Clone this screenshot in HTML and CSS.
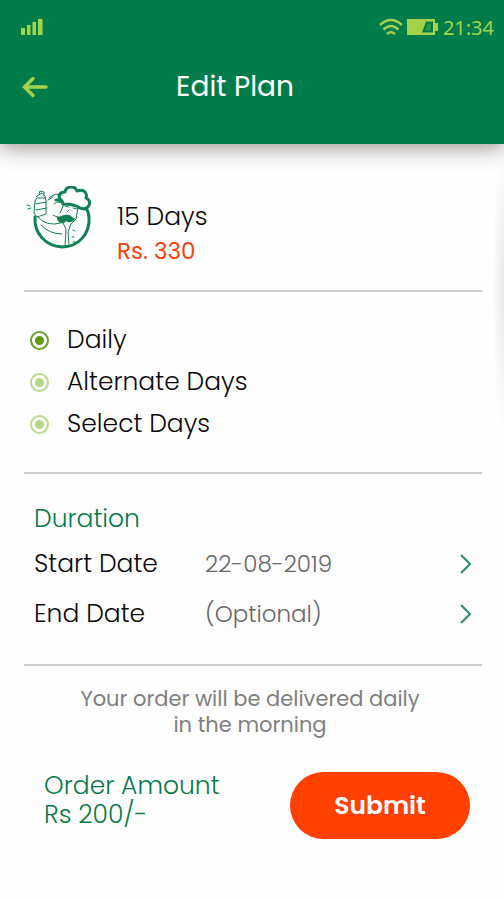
FILE: index.html
```html
<!DOCTYPE html>
<html lang="en">
<head>
  <meta charset="utf-8">
  <meta name="viewport" content="width=device-width, initial-scale=1">
  <title>Edit Plan</title>
  <link rel="stylesheet" href="styles.css">
</head>
<body>
  <header class="app-header">
    <div class="status-bar">
      <svg class="signal" width="24" height="18" viewBox="0 0 24 18" aria-hidden="true">
        <path d="M1 10h4v7H1zM7 7h3.500v10H7zM12.500 4H16v13h-3.500zM18 1h4.500v16H18z"/>
      </svg>
      <div class="status-right">
        <svg class="wifi" width="24" height="18" viewBox="0 0 24 18" aria-hidden="true">
          <path d="M1 7Q12-3 23 7M4.500 11.500q7.500-7 15 0M8 16q4-3.500 8 0"/>
        </svg>
        <svg class="battery" width="32" height="18" viewBox="0 0 32 18" aria-hidden="true">
          <path fill-rule="evenodd" d="M0 1h28v4h3v8h-3v4H0zM19 3.500L15 14.500h11V3.500z"/>
          <path d="M20.500 5.500h3v7h-5.500z" fill="#38953f"/>
        </svg>
        <span class="time">21:34</span>
      </div>
    </div>
    <div class="title-bar">
      <button class="back" type="button" aria-label="Back">
        <svg width="26" height="22" viewBox="0 0 26 22" aria-hidden="true"><path d="M24 11H3M11 2.500L2.500 11l8.500 8.500"/></svg>
      </button>
      <h1 class="title">Edit Plan</h1>
    </div>
  </header>

  <form class="content">
    <section class="plan">
      <svg class="logo" width="66" height="64" viewBox="0 0 66 64" aria-hidden="true">
        <path class="bold" d="M9 31C8 47 19 60 36 61c17 0 28-14 27-29 0-4-1-7-3-10"/>
        <path class="bold" d="M36 16c-2-1-4-3-6-2M36 15c-5-4-3-9 3-9 1-6 10-7 12-1 6-2 11 1 9 7 6 3 4 9-2 11l-4-1c-4-3-11-4-17-4z"/>
        <path class="line" d="M11 10l5-3 3 3 1 5v13l-9 3-3-4 1-12 2-3zM12 12h7M10 18l10-2M10 24l11-2M13 8l1-3 4 1v4M1 19l3 1M2 23l3-1"/>
        <path class="line" d="M23 12q7-6 13-3M22 14l5-3M28 18q5-5 10 1M38 18l-4 9M52 22l-2 11-5 5M39 20l4 1M47 22l4 1M41 26l2-2M12 31q8 10 23 6M15 39q8 9 21 9M27 29l4 2"/>
        <path class="fill" d="M31 30c4 2 6-2 10-1 4-1 5 4 8 3-1 5-7 5-9 3-3 5-10 1-9-5z"/>
        <path class="line" d="M37 37l3 6-1 17M45 38l-3 8 1 13M47 44l2 1M46 51h2M47 56h2"/>
      </svg>
      <div class="plan-text">
        <div class="plan-name">15 Days</div>
        <div class="plan-price">Rs. 330</div>
      </div>
    </section>

    <fieldset class="frequency" aria-label="Frequency">
      <label class="option"><input type="radio" name="frequency" checked>Daily</label>
      <label class="option"><input type="radio" name="frequency">Alternate Days</label>
      <label class="option"><input type="radio" name="frequency">Select Days</label>
    </fieldset>

    <section class="duration">
      <h2 class="duration-title">Duration</h2>
      <div class="date-row">
        <label for="start-date">Start Date</label>
        <input id="start-date" type="text" value="22-08-2019">
        <button type="button" aria-label="Choose start date">
          <svg width="12" height="20" viewBox="0 0 12 20" aria-hidden="true"><path d="M1 1l9 9-9 9"/></svg>
        </button>
      </div>
      <div class="date-row">
        <label for="end-date">End Date</label>
        <input id="end-date" type="text" placeholder="(Optional)">
        <button type="button" aria-label="Choose end date">
          <svg width="12" height="20" viewBox="0 0 12 20" aria-hidden="true"><path d="M1 1l9 9-9 9"/></svg>
        </button>
      </div>
    </section>

    <p class="note">Your order will be delivered daily<br>in the morning</p>

    <footer class="checkout">
      <div class="amount">Order Amount<br>Rs 200/-</div>
      <button class="submit" type="submit">Submit</button>
    </footer>
  </form>
</body>
</html>
```
FILE: styles.css
```css
* {
  box-sizing: border-box;
}

body {
  margin: 0;
  min-height: 100vh;
  background: #fefefe;
  color: #0a0a0a;
  font-family: Poppins, Inter, "Open Sans", sans-serif;
  font-size: 25px;
  font-weight: 300;
}

button,
input {
  font: inherit;
}

button {
  padding: 0;
  border: 0;
  background: none;
  cursor: pointer;
}

svg {
  display: block;
  flex: none;
}

.app-header {
  position: relative;
  padding: 12px 10px 27px 20px;
  background: #007c4a;
  box-shadow: 0 4px 20px rgba(40, 20, 20, 0.45);
}

.status-bar {
  display: flex;
  align-items: center;
  justify-content: space-between;
  height: 30px;
}

.status-right {
  display: flex;
  align-items: center;
  gap: 4px;
}

.signal,
.battery {
  fill: #a3d34b;
}

.wifi {
  fill: none;
  stroke: #a3d34b;
  stroke-width: 2.5;
}

.time {
  color: #a3d34b;
  font-family: "Noto Sans", sans-serif;
  font-size: 20px;
  font-weight: 400;
}

.title-bar {
  display: grid;
  grid-template-columns: 28px 1fr 72px;
  align-items: center;
  height: 60px;
  margin-top: 15px;
}

.back svg {
  margin-left: auto;
  fill: none;
  stroke: #a3d34b;
  stroke-width: 3.5;
  stroke-linecap: round;
}

.title {
  margin: 0;
  color: #fff;
  font-size: 28px;
  font-weight: 400;
  text-align: center;
}

.content {
  padding: 0 22px 0 24px;
  background: radial-gradient(ellipse at right, #e9e9e9, #fefefe 70%) right top / 12px 290px no-repeat;
}

.plan,
.frequency,
.duration {
  margin: 0;
  border: 0;
  border-bottom: 2px solid #ccc;
}

.plan {
  display: flex;
  gap: 25px;
  padding: 42px 2px 22px;
}

.logo .bold,
.logo .line {
  fill: none;
  stroke: #128052;
  stroke-width: 3;
  stroke-linecap: round;
  stroke-linejoin: round;
}

.logo .line {
  stroke-width: 1;
}

.logo .fill {
  fill: #128052;
}

.plan-text {
  padding-top: 14px;
  line-height: 34px;
}

.plan-price {
  color: #f4430d;
  font-size: 23px;
  font-weight: 400;
}

.frequency {
  display: grid;
  gap: 2px;
  padding: 28px 6px;
}

.option {
  display: flex;
  align-items: center;
  gap: 18px;
  height: 40px;
}

.option input {
  appearance: none;
  width: 19px;
  height: 19px;
  margin: 0;
  border: 2px solid #b9dc8c;
  border-radius: 50%;
  background: radial-gradient(circle, #b2da80 4px, #fff 5px);
}

.option input:checked {
  border-color: #6fa02c;
  background: radial-gradient(circle, #5f9a0c 4px, #fff 5px);
}

.duration {
  padding: 25px 10px;
}

.duration-title {
  margin: 0;
  color: #087a48;
  font-size: 25px;
  font-weight: inherit;
  line-height: 40px;
}

.date-row {
  display: grid;
  grid-template-columns: 171px 1fr 12px;
  align-items: center;
  height: 50px;
}

.date-row input {
  min-width: 0;
  padding: 0;
  border: 0;
  background: none;
  color: #686868;
  font-size: 23px;
}

.date-row input::placeholder {
  color: #686868;
  opacity: 1;
}

.date-row svg {
  fill: none;
  stroke: #2c8d67;
  stroke-width: 2;
}

.note {
  margin: 20px 6px 0 0;
  color: #808080;
  font-size: 21px;
  font-weight: 400;
  line-height: 26px;
  text-align: center;
}

.checkout {
  display: flex;
  align-items: center;
  justify-content: space-between;
  padding: 33px 12px 40px 20px;
}

.amount {
  padding-bottom: 11px;
  color: #087a48;
  line-height: 29px;
}

.submit {
  width: 180px;
  height: 67px;
  border-radius: 34px;
  background: #ff4000;
  color: #fff;
  font-size: 25px;
  font-weight: 600;
}
```
